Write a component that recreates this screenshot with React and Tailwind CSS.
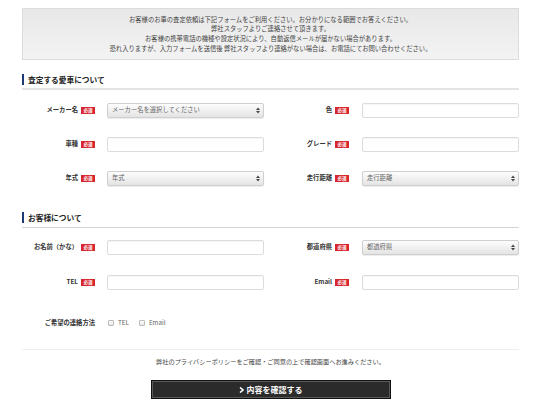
import React from 'react'

const font = { fontFamily: '"Noto Sans CJK JP", "Liberation Sans", sans-serif' }

function Badge() {
  return (
    <span className="inline-flex h-[7px] w-[14px] items-center justify-center bg-[#d7262d] text-[4.5px] font-bold leading-none text-white">
      必須
    </span>
  )
}

function Label({ text, badge = true, width }) {
  return (
    <div className={`flex shrink-0 items-center justify-end gap-[3px] ${width}`}>
      <span className="text-[6.3px] font-bold leading-none text-[#333]">{text}</span>
      {badge && <Badge />}
    </div>
  )
}

function TextInput() {
  return (
    <input
      type="text"
      className="block h-[15px] w-[157px] shrink-0 rounded-[2px] border border-[#dcdcdc] bg-white shadow-[inset_0_1px_1px_rgba(0,0,0,0.04)] outline-none"
    />
  )
}

function SelectBox({ placeholder }) {
  return (
    <div className="flex h-[15px] w-[157px] shrink-0 items-center justify-between rounded-[2px] border border-[#cfcfcf] bg-gradient-to-b from-[#fdfdfd] to-[#e4e4e4] pl-[4px] pr-[3px] shadow-[0_1px_1px_rgba(0,0,0,0.08)]">
      <span className="text-[6.3px] leading-none text-[#666]">{placeholder}</span>
      <svg width="4" height="7" viewBox="0 0 4 7">
        <path d="M0 3 L2 0.5 L4 3 Z" fill="#444" />
        <path d="M0 4 L2 6.5 L4 4 Z" fill="#444" />
      </svg>
    </div>
  )
}

function Row({ left, right, className = '' }) {
  return (
    <div className={`flex h-[15px] items-center ${className}`}>
      <Label text={left.label} width="w-[73px]" />
      <div className="ml-[12px] flex">{left.field}</div>
      <Label text={right.label} width="ml-[11px] w-[74px]" />
      <div className="ml-[13px] flex">{right.field}</div>
    </div>
  )
}

function Heading({ children, className = '' }) {
  return (
    <div className={`flex h-[11px] items-center border-l-2 border-[#1d3a78] pl-[4px] ${className}`}>
      <span className="text-[7.7px] font-bold leading-none text-[#222]">{children}</span>
    </div>
  )
}

function Check({ text }) {
  return (
    <label className="flex items-center gap-[4px]">
      <span className="h-[6px] w-[6px] rounded-[1px] border border-[#bbb] bg-gradient-to-b from-white to-[#e6e6e6]" />
      <span className="text-[6.3px] leading-none text-[#666]">{text}</span>
    </label>
  )
}

export default function App() {
  return (
    <div className="h-[408px] w-[550px] overflow-hidden bg-white" style={font}>
      <div className="ml-[22px] w-[497px] pt-[8px]">
        {/* notice */}
        <div className="flex h-[52px] flex-col items-center justify-center border border-[#dcdcdc] bg-gradient-to-b from-[#e8e8e8] to-[#f3f3f3] text-[6.3px] leading-[9.6px] text-[#444]">
          <p>お客様のお車の査定依頼は下記フォームをご利用ください。お分かりになる範囲でお答えください。</p>
          <p>弊社スタッフよりご連絡させて頂きます。</p>
          <p>お客様の携帯電話の機種や設定状況により、自動返信メールが届かない場合があります。</p>
          <p>恐れ入りますが、入力フォームを送信後 弊社スタッフより連絡がない場合は、お電話にてお問い合わせください。</p>
        </div>

        {/* car section */}
        <Heading className="mt-[14px]">査定する愛車について</Heading>
        <div className="mt-[3px] h-[2px] bg-[#e4e4e4]" />

        <Row
          className="mt-[13px]"
          left={{ label: 'メーカー名', field: <SelectBox placeholder="メーカー名を選択してください" /> }}
          right={{ label: '色', field: <TextInput /> }}
        />
        <Row
          className="mt-[19px]"
          left={{ label: '車種', field: <TextInput /> }}
          right={{ label: 'グレード', field: <TextInput /> }}
        />
        <Row
          className="mt-[19px]"
          left={{ label: '年式', field: <SelectBox placeholder="年式" /> }}
          right={{ label: '走行距離', field: <SelectBox placeholder="走行距離" /> }}
        />

        {/* customer section */}
        <Heading className="mt-[26px]">お客様について</Heading>
        <div className="mt-[4px] h-px bg-[#d4d4d4]" />

        <Row
          className="mt-[12px]"
          left={{ label: 'お名前（かな）', field: <TextInput /> }}
          right={{ label: '都道府県', field: <SelectBox placeholder="都道府県" /> }}
        />
        <Row
          className="mt-[20px]"
          left={{ label: 'TEL', field: <TextInput /> }}
          right={{ label: 'Email', field: <TextInput /> }}
        />

        <div className="mt-[28px] flex h-[10px] items-center">
          <Label text="ご希望の連絡方法" badge={false} width="w-[73px]" />
          <div className="ml-[13px] flex items-center gap-[10px]">
            <Check text="TEL" />
            <Check text="Email" />
          </div>
        </div>

        <div className="mt-[21px] h-px bg-[#efefef]" />

        <p className="mt-[7px] text-center text-[6.2px] leading-[10px] text-[#444]">
          弊社のプライバシーポリシーをご確認・ご同意の上で確認画面へお進みください。
        </p>

        <button className="mx-auto mt-[13px] flex h-[19px] w-[240px] items-center justify-center gap-[3px] border border-[#111] bg-[#2b2b2b] shadow-[inset_0_0_0_1px_#5a5a5a]">
          <svg width="5" height="6" viewBox="0 0 5 6">
            <path d="M1 0.5 L4 3 L1 5.5" fill="none" stroke="#fff" strokeWidth="1.6" />
          </svg>
          <span className="text-[8px] font-bold leading-none text-white">内容を確認する</span>
        </button>
      </div>
    </div>
  )
}
